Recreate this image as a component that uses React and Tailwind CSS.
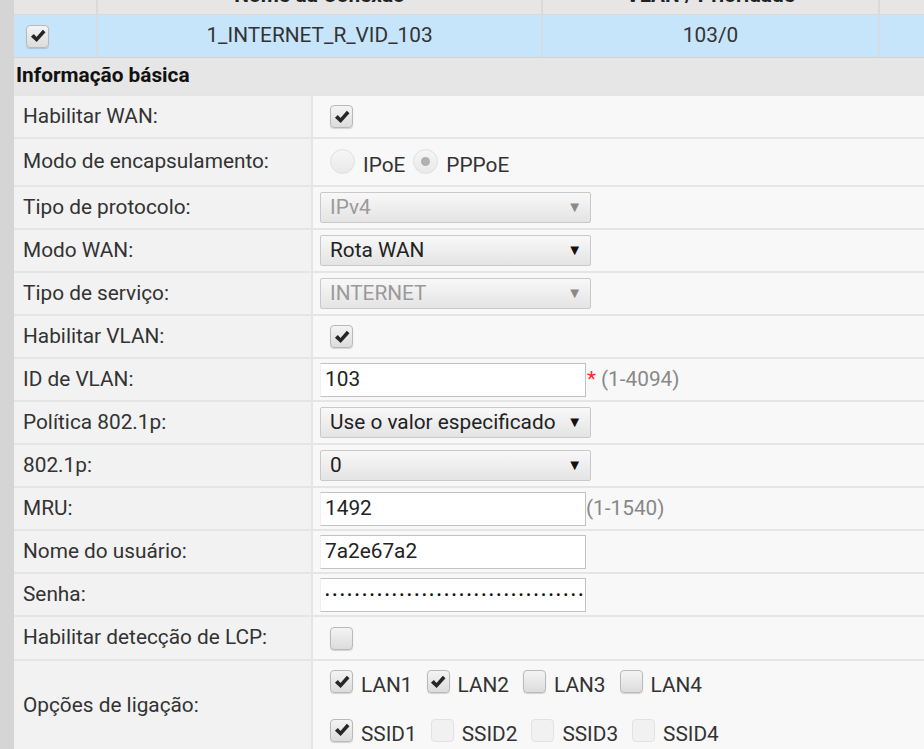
import React from "react";

function Check({ className = "" }) {
  return (
    <svg viewBox="0 0 24 24" className={className}>
      <path d="M3.5 12.8 L7 9.6 L10.2 13.2 L17.8 4.4 L21 7.4 L10.4 19.2 Z" fill="#262626" />
    </svg>
  );
}

function Checkbox({ checked, disabled, className = "" }) {
  return (
    <span
      className={
        "inline-flex h-[23px] w-[23px] shrink-0 items-center justify-center rounded-[4px] border " +
        (disabled
          ? "border-[#e2e2e2] bg-[#f1f1f1] "
          : "border-[#b9b9b9] bg-gradient-to-b from-[#f4f4f4] to-[#dcdcdc] shadow-[0_1px_1px_rgba(0,0,0,0.15)] ") +
        className
      }
    >
      {checked && <Check className="h-[20px] w-[20px]" />}
    </span>
  );
}

function Radio({ checked }) {
  return (
    <span className="mb-[10px] inline-flex h-[25px] w-[25px] shrink-0 items-center justify-center rounded-full border border-[#e0e0e0] bg-gradient-to-b from-[#f6f6f6] to-[#e9e9e9]">
      {checked && <span className="h-[9px] w-[9px] rounded-full bg-[#b0b0b0]" />}
    </span>
  );
}

function Select({ value, disabled }) {
  return (
    <div className="flex h-[31px] w-[271px] items-center justify-between rounded-[2px] border border-[#c9c9c9] bg-gradient-to-b from-[#f8f8f8] to-[#e4e4e4] pl-[9px] pr-[8px]">
      <span className={disabled ? "text-[#9a9a9a]" : "text-[#222]"}>{value}</span>
      <span className={"text-[15px] " + (disabled ? "text-[#8a8a8a]" : "text-[#111]")}>▼</span>
    </div>
  );
}

function TextInput({ value, password }) {
  return (
    <div className="flex h-[34px] w-[266px] items-center border border-[#c2c2c2] border-l-[#f0f0f0] bg-white pl-[4px] text-[#222]">
      {password ? (
        <span className="text-[13.5px] tracking-[2.9px] text-[#111]">{"•".repeat(35)}</span>
      ) : (
        value
      )}
    </div>
  );
}

function Row({ label, h = "h-[43px]", children }) {
  return (
    <div className={"grid grid-cols-[299px_1fr] border-t-2 border-[#e5e5e5] " + h}>
      <div className="flex items-center border-r-2 border-[#e5e5e5] bg-[#f2f2f2] pl-[9px]">{label}</div>
      <div className="flex items-center bg-[#f8f8f8] pl-[17px]">{children}</div>
    </div>
  );
}

function Opt({ label, checked, disabled }) {
  return (
    <span className="flex items-center">
      <Checkbox checked={checked} disabled={disabled} className="mb-[8px]" />
      <span className="ml-[8px] mr-[14px]">{label}</span>
    </span>
  );
}

export default function App() {
  return (
    <div className="flex h-[749px] overflow-hidden bg-[#e6e6e6] font-['Roboto',sans-serif] text-[20.8px] text-[#333]">
      <div className="w-[14px] shrink-0 bg-[#d5d5d5]" />
      <div className="min-w-0 flex-1">
        <div className="-mt-[23px] grid h-[38px] grid-cols-[84px_445px_337px_1fr] border-b border-[#d9d9d9] bg-[#e6e6e6] font-bold text-[#222]">
          <div className="border-r-2 border-[#dadada]" />
          <div className="flex items-center justify-center border-r-2 border-[#dadada]">Nome da Conexão</div>
          <div className="flex items-center justify-center border-r-2 border-[#dadada]">VLAN / Prioridade</div>
          <div />
        </div>
        <div className="grid h-[43px] grid-cols-[84px_445px_337px_1fr] border-b border-[#d2d2d2] bg-[#c6e5fb]">
          <div className="flex items-center border-r-2 border-[#d6dde2] pl-[12px]">
            <Checkbox checked />
          </div>
          <div className="flex items-center justify-center border-r-2 border-[#d6dde2]">1_INTERNET_R_VID_103</div>
          <div className="flex items-center justify-center border-r-2 border-[#d6dde2]">103/0</div>
          <div />
        </div>
        <div className="flex h-[36px] items-center pl-[2px] font-bold text-[#111]">Informação básica</div>

        <Row label="Habilitar WAN:">
          <Checkbox checked />
        </Row>
        <Row label="Modo de encapsulamento:" h="h-[48px]">
          <div className="flex items-center pt-[8px]">
            <Radio />
            <span className="ml-[8px] mr-[8px]">IPoE</span>
            <Radio checked />
            <span className="ml-[8px]">PPPoE</span>
          </div>
        </Row>
        <Row label="Tipo de protocolo:">
          <div className="-ml-[10px]">
            <Select value="IPv4" disabled />
          </div>
        </Row>
        <Row label="Modo WAN:">
          <div className="-ml-[10px]">
            <Select value="Rota WAN" />
          </div>
        </Row>
        <Row label="Tipo de serviço:">
          <div className="-ml-[10px]">
            <Select value="INTERNET" disabled />
          </div>
        </Row>
        <Row label="Habilitar VLAN:">
          <Checkbox checked />
        </Row>
        <Row label="ID de VLAN:">
          <div className="-ml-[10px] flex items-center">
            <TextInput value="103" />
            <span className="ml-[1px] text-[#ff2a2a]">*</span>
            <span className="ml-[5px] text-[#888]">(1-4094)</span>
          </div>
        </Row>
        <Row label="Política 802.1p:">
          <div className="-ml-[10px]">
            <Select value="Use o valor especificado" />
          </div>
        </Row>
        <Row label="802.1p:">
          <div className="-ml-[10px]">
            <Select value="0" />
          </div>
        </Row>
        <Row label="MRU:">
          <div className="-ml-[10px] flex items-center">
            <TextInput value="1492" />
            <span className="text-[#888]">(1-1540)</span>
          </div>
        </Row>
        <Row label="Nome do usuário:">
          <div className="-ml-[10px]">
            <TextInput value="7a2e67a2" />
          </div>
        </Row>
        <Row label="Senha:">
          <div className="-ml-[10px]">
            <TextInput password />
          </div>
        </Row>
        <Row label="Habilitar detecção de LCP:" h="h-[44px]">
          <Checkbox />
        </Row>
        <Row label="Opções de ligação:" h="h-[92px]">
          <div className="flex flex-col gap-[17px] pt-[8px]">
            <div className="flex items-center">
              <Opt label="LAN1" checked />
              <Opt label="LAN2" checked />
              <Opt label="LAN3" />
              <Opt label="LAN4" />
            </div>
            <div className="flex items-center">
              <Opt label="SSID1" checked />
              <Opt label="SSID2" disabled />
              <Opt label="SSID3" disabled />
              <Opt label="SSID4" disabled />
            </div>
          </div>
        </Row>
      </div>
    </div>
  );
}
